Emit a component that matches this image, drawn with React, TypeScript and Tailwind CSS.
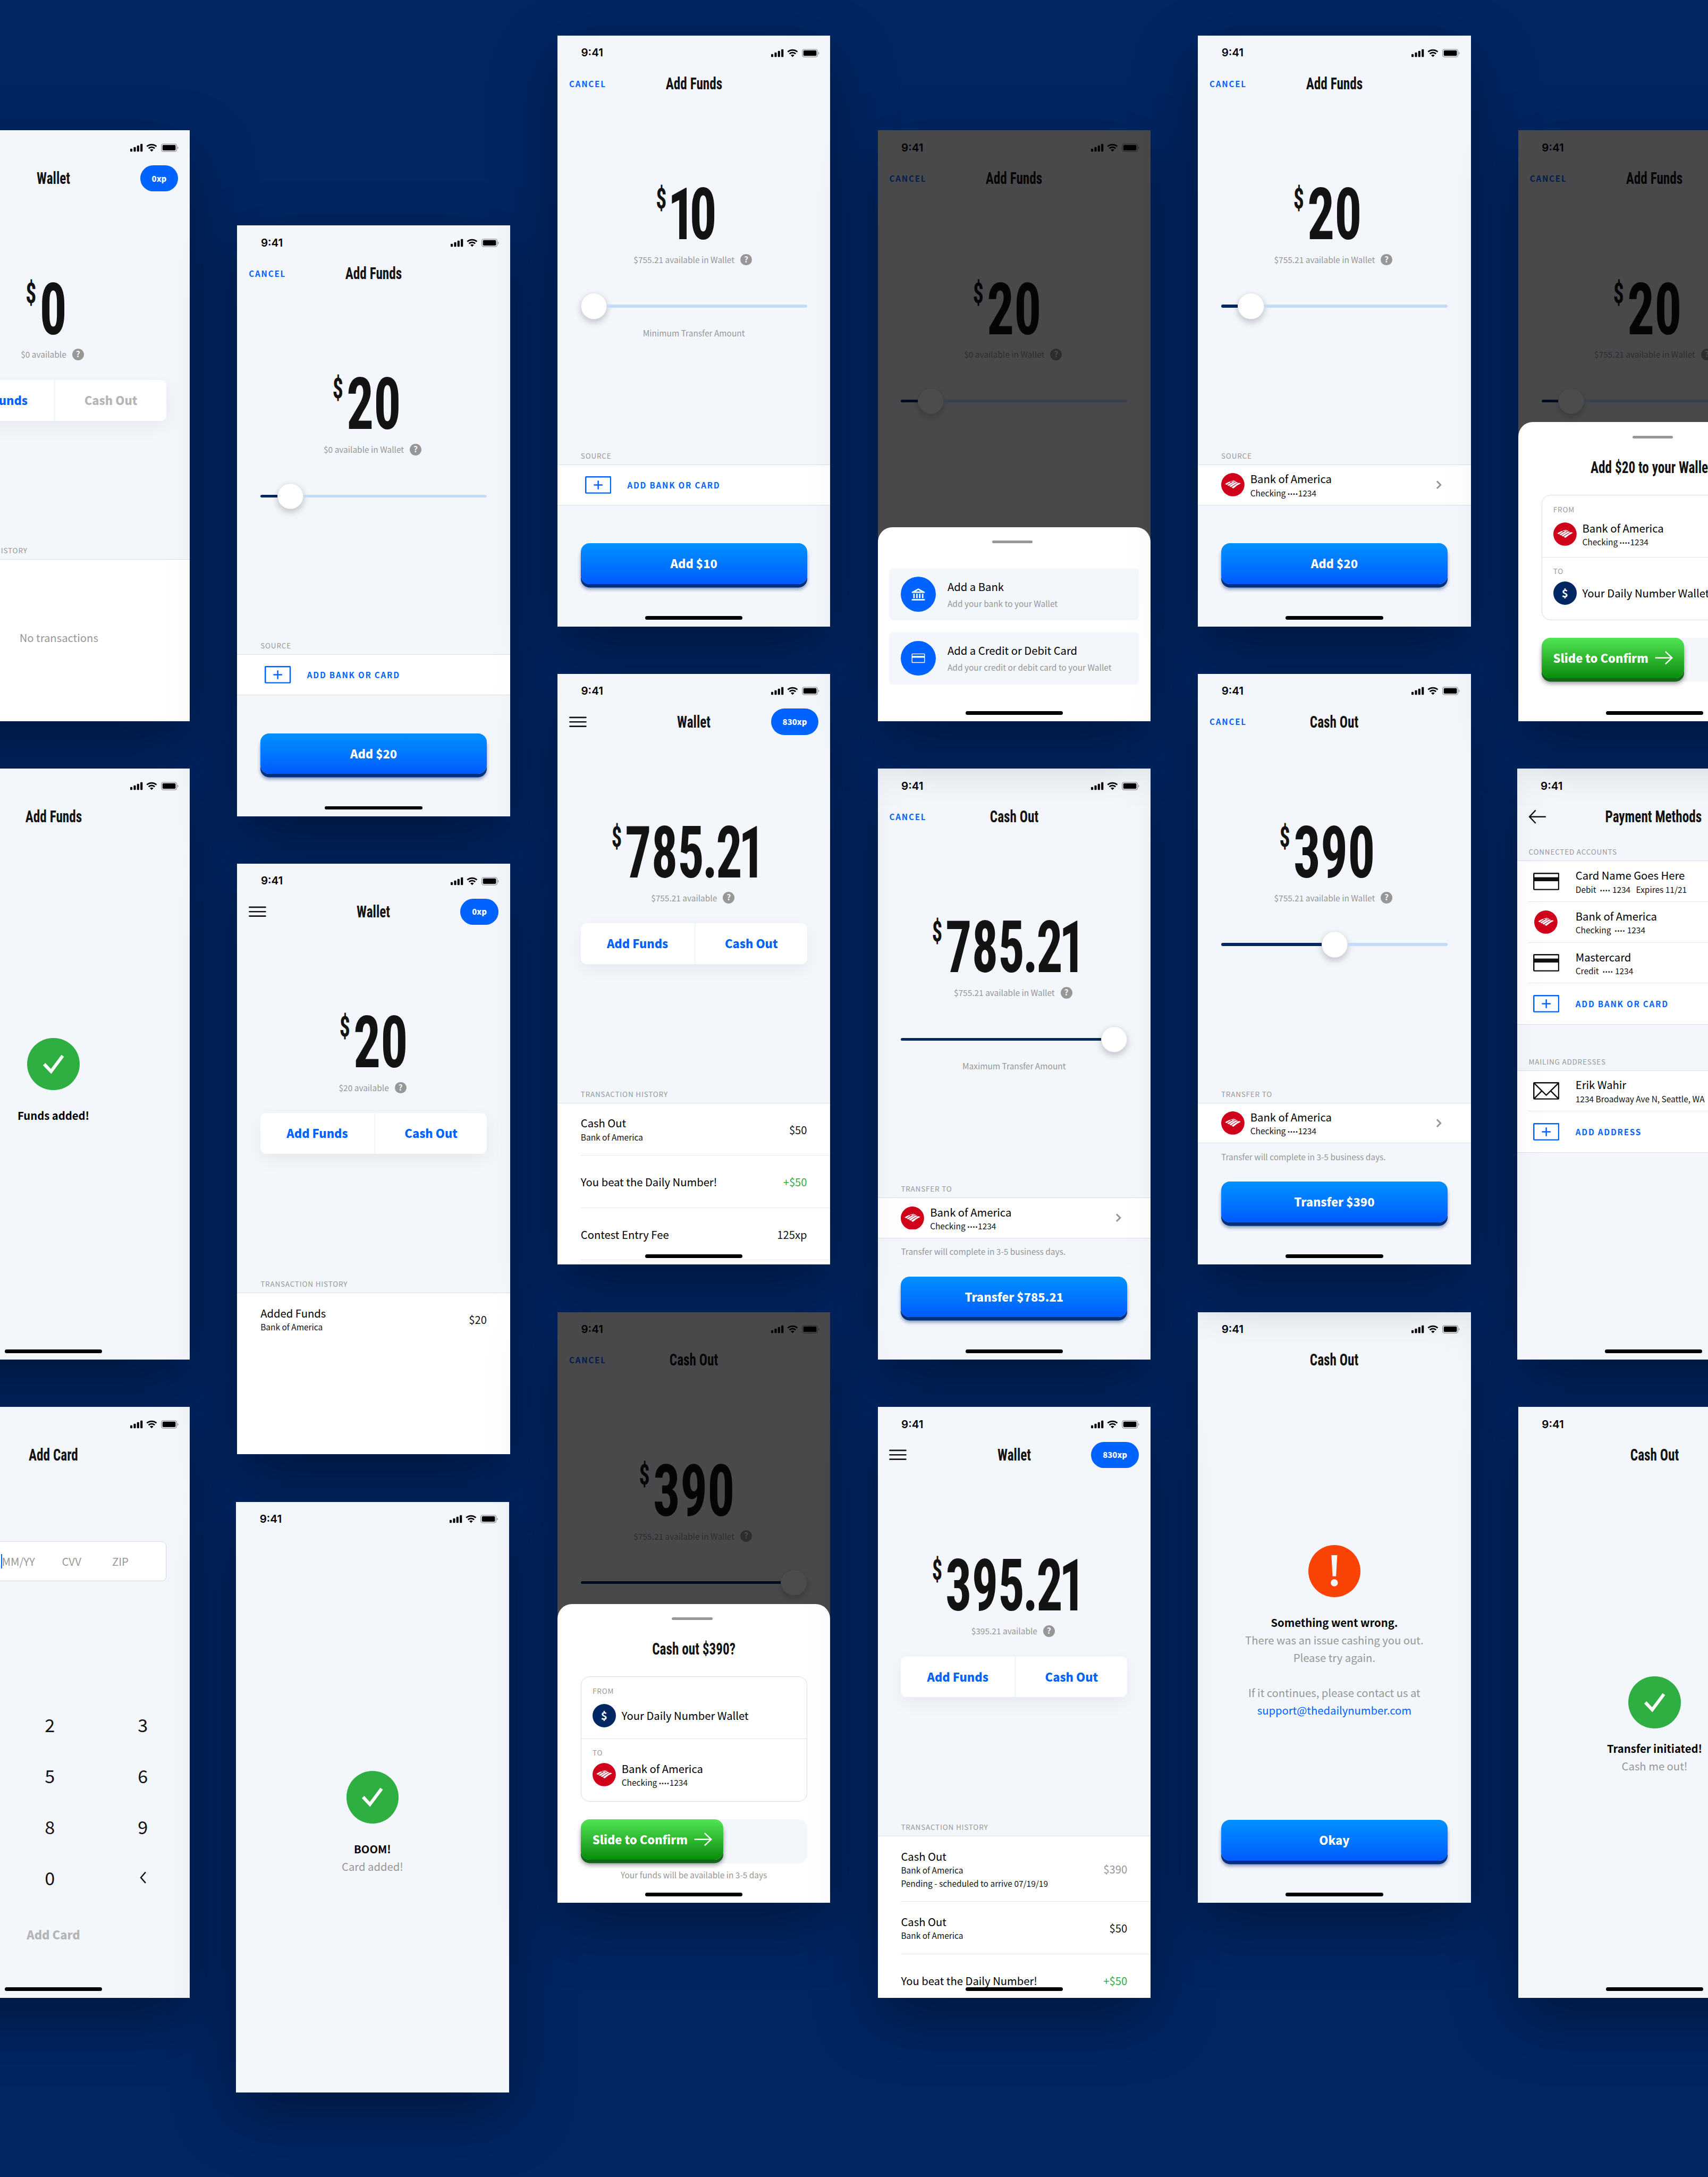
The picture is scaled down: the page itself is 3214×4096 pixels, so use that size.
import type { ReactNode } from "react";

/* ---------- icons ---------- */

function StatusIcons() {
  return (
    <svg className="h-[12px] w-[67px] text-black" viewBox="0 0 67 12" fill="currentColor">
      <rect x="0" y="7.2" width="3" height="4" rx="0.8" />
      <rect x="4.7" y="5" width="3" height="6.2" rx="0.8" />
      <rect x="9.3" y="2.8" width="3" height="8.4" rx="0.8" />
      <rect x="14" y="0.5" width="3" height="10.7" rx="0.8" />
      <g fill="none" stroke="currentColor" strokeWidth="2">
        <path d="M22.9 4.1A9.6 9.6 0 0 1 36.1 4.1" />
        <path d="M25.3 6.7A6 6 0 0 1 33.7 6.7" />
      </g>
      <path d="M27.1 8.8A3.4 3.4 0 0 1 31.9 8.8L29.5 11.2Z" />
      <rect x="42.9" y="0.6" width="21" height="10.4" rx="2.6" fill="none" stroke="currentColor" opacity="0.38" />
      <path d="M65 4v3.8a2.1 2.1 0 0 0 0-3.8Z" opacity="0.4" />
      <rect x="44.4" y="2.1" width="18" height="7.4" rx="1.3" />
    </svg>
  );
}

function AddBoxIcon() {
  return (
    <svg className="h-6 w-9" viewBox="0 0 36 24" fill="none" stroke="#0063ff" strokeWidth="1.8">
      <rect x="0.9" y="0.9" width="34.2" height="22.2" rx="0.6" />
      <path d="M12 12h12M18 6v12" />
    </svg>
  );
}

function CardIcon() {
  return (
    <svg className="h-6 w-9" viewBox="0 0 36 24" fill="none" stroke="#111" strokeWidth="1.8">
      <rect x="0.9" y="0.9" width="34.2" height="22.2" rx="0.8" />
      <path d="M1 9h34" strokeWidth="5.4" />
    </svg>
  );
}

function MailIcon() {
  return (
    <svg className="h-6 w-9" viewBox="0 0 36 24" fill="none" stroke="#111" strokeWidth="1.8">
      <rect x="0.9" y="0.9" width="34.2" height="22.2" rx="0.8" />
      <path d="M1.4 1.6L18 18L34.6 1.6M1.4 22.6L12 12M34.6 22.6L24 12" />
    </svg>
  );
}

function BofaIcon() {
  return (
    <svg className="h-8 w-8 shrink-0" viewBox="0 0 32 32">
      <circle cx="16" cy="16" r="16" fill="#d0021b" />
      <g fill="#fff">
        <path d="M14.2 19.8C17.6 17.2 20.6 15.1 24.2 13.4L27 14.2C23.2 15.9 20.1 18.2 16.6 21.2Z" />
        <path d="M11.1 18.1C14.4 15.7 17.2 13.9 20.7 12.3L23.2 13.1C19.7 14.7 16.7 16.8 13.4 19.4Z" />
        <path d="M8.3 16.6C11 14.7 13.2 13.5 16 12.1L18 12.9C15.3 14.2 13 15.7 10.4 17.7Z" />
        <path d="M5.4 15C7.7 13.5 9.3 12.6 11.4 11.7L13.4 12.4C11.3 13.5 9.6 14.6 7.5 16.2Z" />
        <path d="M12.3 11.3L14.1 10.7L20 12L18.7 12.6Z" />
        <path d="M15 10.5L16.5 10.1L20.8 11.3L19.9 11.7Z" />
      </g>
    </svg>
  );
}

function DollarIcon() {
  return (
    <div className="flex h-8 w-8 shrink-0 items-center justify-center rounded-full bg-[#002664]">
      <span className="text-[15px] leading-[16px] font-bold text-white">$</span>
    </div>
  );
}

function ArrowRight() {
  return (
    <svg className="h-[20px] w-[25px]" viewBox="0 0 25 20" fill="none" stroke="#fff" strokeWidth="1.8">
      <path d="M0.5 10h23M14.5 1.4L23.5 10L14.5 18.6" />
    </svg>
  );
}

/* ---------- text primitives ---------- */

function Heading({ children }: { children: ReactNode }) {
  return (
    <span className="inline-block scale-x-[0.795] pt-[1px] font-['Roboto_Condensed','Roboto',sans-serif] text-[23.2px] leading-[28px] font-bold whitespace-nowrap text-[#131313] [font-stretch:75%]">
      {children}
    </span>
  );
}

function SectionLabel({ children, inset = "pl-8" }: { children: ReactNode; inset?: string }) {
  return (
    <div className={`${inset} h-[20.5px] shrink-0 text-[9.85px] leading-[16.5px] tracking-[0.6px] whitespace-nowrap text-[#979797]`}>
      {children}
    </div>
  );
}

function TextLink({ children }: { children: ReactNode }) {
  return (
    <span className="pt-[0.5px] text-[11.1px] leading-[16px] font-bold tracking-[1.3px] whitespace-nowrap text-[#0063ff]">
      {children}
    </span>
  );
}

/* ---------- chrome ---------- */

function StatusBar() {
  return (
    <div className="flex h-11 shrink-0 items-center justify-between pt-1 pr-[14.6px] pl-[32.5px]">
      <span className="font-['Inter',sans-serif] text-[15px] leading-[18px] font-semibold text-black">9:41</span>
      <StatusIcons />
    </div>
  );
}

type Left = "cancel" | "menu" | "back";

function NavBar({ title, left, xp }: { title?: string; left?: Left; xp?: string }) {
  return (
    <div className="grid h-11 shrink-0 grid-cols-[1fr_auto_1fr] items-center px-4">
      <div className="flex">
        {left === "cancel" && <TextLink>CANCEL</TextLink>}
        {left === "menu" && (
          <svg className="h-[15px] w-6" viewBox="0 0 24 15" stroke="#131313" strokeWidth="1.9" strokeLinecap="round">
            <path d="M1 1.4h22M1 7.5h22M1 13.6h22" />
          </svg>
        )}
        {left === "back" && (
          <svg className="h-5 w-6" viewBox="0 0 24 20" fill="none" stroke="#131313" strokeWidth="1.8">
            <path d="M24 10H1.5M10 1L1.5 10L10 19" />
          </svg>
        )}
      </div>
      <div>{title && <Heading>{title}</Heading>}</div>
      <div className="flex justify-end">
        {xp && (
          <span className="flex h-9 items-center rounded-full bg-[#0063ff] px-4 text-[10.9px] leading-[16px] font-black text-white">
            {xp}
          </span>
        )}
      </div>
    </div>
  );
}

function Phone({
  children,
  title,
  left,
  xp,
  under,
  home = true,
  sheet,
  shift,
}: {
  children?: ReactNode;
  title?: string;
  left?: Left;
  xp?: string;
  under?: boolean;
  home?: boolean;
  sheet?: ReactNode;
  shift?: boolean;
}) {
  return (
    <div
      className={`relative flex h-[812px] w-[375px] shrink-0 flex-col overflow-hidden bg-[#f3f6fb] text-black shadow-[0_30px_80px_rgba(0,0,0,0.4)] ${
        under ? "z-0" : "z-10"
      } ${shift ? "-ml-[1.6px]" : ""}`}
    >
      <StatusBar />
      <NavBar title={title} left={left} xp={xp} />
      {children}
      {sheet && <div className="absolute inset-0 flex flex-col justify-end bg-black/70">{sheet}</div>}
      {home && (
        <div className="absolute inset-x-0 bottom-[9px] flex justify-center">
          <div className="h-[5px] w-[134px] rounded-full bg-black" />
        </div>
      )}
    </div>
  );
}

/* ---------- wallet pieces ---------- */

/* Tightens the space round the narrow glyphs, which are tabular in this face. */
function kern(char: string, next?: string) {
  let space = 0;
  if (char === "1") space -= 10;
  if (char === ".") space -= 3;
  if (next === "1") space -= 7;
  if (next === ".") space -= 3;
  return space;
}

function Digits({ value }: { value: string }) {
  return (
    <span className="whitespace-nowrap">
      {value.split("").map((c, i) => (
        <span key={i} style={{ letterSpacing: kern(c, value[i + 1]) }}>
          {c}
        </span>
      ))}
    </span>
  );
}

function Amount({ value, available, centered }: { value: string; available: string; centered?: boolean }) {
  const leadingOne = value.startsWith("1");
  return (
    <>
      <div
        className={`mt-[122.5px] flex h-[72px] shrink-0 justify-center font-['Roboto_Condensed','Roboto',sans-serif] font-bold text-[#131313] [font-stretch:75%] ${
          centered ? "pl-[19px]" : ""
        } ${leadingOne ? "pr-[5px]" : ""} ${value.includes(".") ? "pr-[4px]" : ""}`}
      >
        <div
          className={`relative flex text-[98.8px] leading-[72px] ${
            value.includes(".") ? "scale-x-[0.725]" : "scale-x-[0.75]"
          }`}
        >
          <Digits value={value} />
          <span
            className={`absolute top-[-6px] right-full text-[38.7px] leading-[40px] ${
              leadingOne ? "mr-[2px]" : "mr-[6px]"
            }`}
          >
            $
          </span>
        </div>
      </div>
      <div className="mt-[17.5px] flex h-4 shrink-0 items-center justify-center gap-2 pr-[3px]">
        <span className="pt-[0.5px] text-[11.3px] leading-[16px] whitespace-nowrap text-[#979797]">{available}</span>
        <span className="flex h-4 w-4 items-center justify-center rounded-full bg-[#979797] text-[11.5px] leading-[12px] font-bold text-[#f3f6fb]">
          <span className="-mt-px">?</span>
        </span>
      </div>
    </>
  );
}

function Slider({ at, note }: { at: number; note?: string }) {
  return (
    <>
      <div className="mx-8 mt-[38px] flex h-9 w-[311px] shrink-0 items-center">
        <div className="h-1 rounded-l-full bg-[#002664]" style={{ width: at }} />
        <div className="h-9 w-9 shrink-0 rounded-full border-[0.5px] border-black/10 bg-white shadow-[0_4px_9px_rgba(0,0,0,0.22)]" />
        <div className="h-1 flex-1 rounded-r-full bg-[#c4dbfd]" />
      </div>
      {note && <div className="mt-[11px] text-center text-[11.3px] leading-[16px] text-[#979797]">{note}</div>}
    </>
  );
}

function PrimaryButton({ children }: { children: ReactNode }) {
  return (
    <div className="mx-8 mb-[58px] flex h-14 w-[311px] shrink-0 items-center justify-center rounded-[12px] bg-linear-to-b from-[#0090ff] to-[#0059ff] pb-[1px] text-[16px] leading-[20px] font-black text-white shadow-[0_4.7px_0_#002f7e,0_7px_5px_rgba(0,40,110,0.45)]">
      {children}
    </div>
  );
}

/* A masked number: the dots need a face whose bullet is not full width. */
function Masked({ text }: { text: string }) {
  const [before, after] = text.split("••••");
  if (after === undefined) return <>{text}</>;
  return (
    <>
      {before}
      <span className="font-['Roboto',sans-serif] text-[9.6px] tracking-[0.4px]">••••</span>
      {after}
    </>
  );
}

function BankText({ sub = "Checking ••••1234", name = "Bank of America" }: { sub?: string; name?: string }) {
  return (
    <div className="flex flex-col pt-[1.5px] whitespace-nowrap">
      <span className="text-[14.78px] leading-[20px]">{name}</span>
      <span className="h-[18px] text-[11.3px] leading-[18px] whitespace-pre text-[#131313]">
        <Masked text={sub} />
      </span>
    </div>
  );
}

function SourceRow({ linked }: { linked: boolean }) {
  return (
    <div className="flex h-14 shrink-0 items-center border-y border-[#dcdfe3] bg-white">
      {linked ? (
        <>
          <div className="pl-8">
            <BofaIcon />
          </div>
          <div className="flex-1 pl-[8px]">
            <BankText />
          </div>
          <svg className="mr-[40px] h-[12px] w-[8px]" viewBox="0 0 8 12" fill="none" stroke="#979797" strokeWidth="2.2">
            <path d="M1.4 1L6.4 6L1.4 11" />
          </svg>
        </>
      ) : (
        <>
          <div className="w-24 pl-[38px]">
            <AddBoxIcon />
          </div>
          <TextLink>ADD BANK OR CARD</TextLink>
        </>
      )}
    </div>
  );
}

function TransferScreen({
  value,
  available,
  at,
  note,
  label,
  linked,
  footnote,
  button,
}: {
  value: string;
  available: string;
  at: number;
  note?: string;
  label?: string;
  linked?: boolean;
  footnote?: string;
  button?: string;
}) {
  return (
    <>
      <Amount value={value} available={available} />
      <Slider at={at} note={note} />
      {label && (
        <>
          <div className="flex-1" />
          <SectionLabel>{label}</SectionLabel>
          <SourceRow linked={!!linked} />
          <div className="h-[52.5px] shrink-0 pt-[10.5px] pl-8 text-[11.3px] leading-[16px] text-[#979797]">{footnote}</div>
          <PrimaryButton>{button}</PrimaryButton>
        </>
      )}
    </>
  );
}

type Tx = { name: string; lines?: string[]; amount: string; tone?: string };

function WalletScreen({
  value,
  available,
  canCashOut = true,
  centered,
  history,
}: {
  value: string;
  available: string;
  canCashOut?: boolean;
  centered?: boolean;
  history: Tx[];
}) {
  return (
    <>
      <Amount value={value} available={available} centered={centered} />
      <div className="mx-8 mt-[27px] grid h-14 w-[311px] shrink-0 grid-cols-[156px_1fr] overflow-hidden rounded-[8px] text-center text-[16px] leading-[55px] font-black text-[#0063ff] shadow-[0_8px_24px_rgba(0,0,0,0.06)]">
        <span className="bg-white">Add Funds</span>
        <span className={`ml-[2px] bg-white ${canCashOut ? "" : "text-[#b5b5b5]"}`}>Cash Out</span>
      </div>
      <div className="flex-1" />
      <SectionLabel>TRANSACTION HISTORY</SectionLabel>
      <div className="h-[222.5px] shrink-0 overflow-hidden border-t border-[#dcdfe3] bg-white">
        {history.length === 0 && (
          <div className="pt-[97px] pl-[15px] text-center text-[14.78px] leading-[20px] text-[#979797]">No transactions</div>
        )}
        {history.map((t, i) => (
          <div
            key={i}
            className={`ml-8 flex items-center justify-between pt-[1px] pr-8 ${
              history.length > 1 ? "border-b border-[#e3e5e6]" : ""
            } ${t.lines && t.lines.length > 1 ? "h-[90px]" : "h-[72px]"}`}
          >
            <div className="flex flex-col whitespace-nowrap">
              <span className="text-[14.78px] leading-[20px]">{t.name}</span>
              {t.lines?.map((l) => (
                <span key={l} className="text-[11.3px] leading-[18px] text-[#131313]">
                  {l}
                </span>
              ))}
            </div>
            <span className={`text-[14.78px] leading-[20px] ${t.tone ?? "text-[#131313]"}`}>{t.amount}</span>
          </div>
        ))}
      </div>
    </>
  );
}

/* ---------- sheets ---------- */

function SheetHandle() {
  return <div className="mt-[18.5px] ml-[157px] h-1 w-14 rounded-full bg-[#979797]" />;
}

function MethodSheet() {
  const items = [
    { name: "Add a Bank", sub: "Add your bank to your Wallet", bank: true },
    { name: "Add a Credit or Debit Card", sub: "Add your credit or debit card to your Wallet", bank: false },
  ];
  return (
    <div className="flex h-[267px] flex-col rounded-t-[20px] bg-white">
      <SheetHandle />
      <div className="mx-4 mt-[34px] flex flex-col gap-4">
        {items.map((m) => (
          <div key={m.name} className="flex h-[72px] items-center rounded-[6px] bg-[#f3f6fb] pl-4">
            <div className="flex h-12 w-12 items-center justify-center rounded-full bg-[#0063ff]">
              {m.bank ? (
                <svg className="h-[18px] w-[19px]" viewBox="0 0 19 18" fill="#fff">
                  <path fillRule="evenodd" d="M9.5 0.8L18.5 5.6V7H0.5V5.6ZM9.5 2.9L6 4.9H13Z" />
                  <path d="M2.6 8h2v6.2h-2zM6.6 8h2v6.2h-2zM10.5 8h2v6.2h-2zM14.5 8h2v6.2h-2zM0.5 15.4h18v2h-18z" />
                </svg>
              ) : (
                <svg className="h-[14px] w-[19px]" viewBox="0 0 19 14" fill="none" stroke="#fff">
                  <rect x="0.9" y="1" width="17.2" height="11.8" rx="0.4" />
                  <path d="M1 5h17" strokeWidth="2.4" />
                </svg>
              )}
            </div>
            <div className="flex flex-col pt-[3px] pl-4 whitespace-nowrap">
              <span className="text-[14.78px] leading-[22px]">{m.name}</span>
              <span className="text-[11.3px] leading-[24px] text-[#979797]">{m.sub}</span>
            </div>
          </div>
        ))}
      </div>
    </div>
  );
}

function ConfirmSheet({ title, reverse, note }: { title: string; reverse?: boolean; note?: string }) {
  const bank = (
    <>
      <BofaIcon />
      <BankText />
    </>
  );
  const wallet = (
    <>
      <DollarIcon />
      <span className="text-[14.78px] leading-[20px] whitespace-nowrap">Your Daily Number Wallet</span>
    </>
  );
  return (
    <div className="flex h-[411px] flex-col rounded-t-[20px] bg-white">
      <SheetHandle />
      <div className="mt-[25px] h-[28px] text-center">
        <Heading>{title}</Heading>
      </div>
      <div className="mx-8 mt-[24.5px] h-[172px] rounded-[12px] border border-[#dcdcdc]">
        <div className="h-[85px] border-b border-[#e3e3e3] pt-[11.5px] pl-[15.5px]">
          <div className="text-[9.85px] leading-[16px] tracking-[0.6px] text-[#979797]">FROM</div>
          <div className="mt-[9.5px] flex h-8 items-center gap-[8px]">{reverse ? wallet : bank}</div>
        </div>
        <div className="pt-[11px] pl-[15.5px]">
          <div className="text-[9.85px] leading-[16px] tracking-[0.6px] text-[#979797]">TO</div>
          <div className="mt-[6px] flex h-8 items-center gap-[8px]">{reverse ? bank : wallet}</div>
        </div>
      </div>
      <div className="mx-8 mt-[24px] h-[61px] rounded-[12px] bg-[#f3f6fb]">
        <div className="flex h-14 w-[196px] items-center gap-[9px] rounded-[12px] bg-linear-to-b from-[#4fe552] to-[#038d06] pl-4 text-[16px] leading-[20px] font-black whitespace-nowrap text-white shadow-[0_4.7px_0_#14661a,0_7px_6px_rgba(0,0,0,0.4)]">
          Slide to Confirm
          <ArrowRight />
        </div>
      </div>
      {note && <div className="mt-[8px] text-center text-[11.3px] leading-[16px] text-[#979797]">{note}</div>}
    </div>
  );
}

/* ---------- result screens ---------- */

function Success({ title, note, tight }: { title: string; note?: string; tight?: boolean }) {
  return (
    <div className="flex flex-col items-center pt-[282px] text-[14.78px] leading-[24px]">
      <div className="flex h-[72px] w-[72px] items-center justify-center rounded-full bg-[#2fae42]">
        <svg className="h-[28px] w-[32px]" viewBox="0 0 32 28" fill="none" stroke="#fff" strokeWidth="4.4">
          <path d="M3 14L12.5 24L28.5 2.5" />
        </svg>
      </div>
      <span className={`font-bold ${tight ? "mt-[16px]" : "mt-[23.5px]"}`}>{title}</span>
      {note && <span className="text-[#979797]">{note}</span>}
    </div>
  );
}

function ErrorScreen() {
  return (
    <>
      <div className="flex flex-col items-center pt-[232px] text-[14.78px] leading-[24px] text-[#979797]">
        <div className="flex h-[72px] w-[72px] items-center justify-center rounded-full bg-[#fa4406]">
          <svg className="h-[43px] w-[10px]" viewBox="0 0 10 43" fill="#f3f6fb">
            <path d="M1 0H9L7.4 29H2.6Z" />
            <circle cx="5" cy="38" r="4.9" />
          </svg>
        </div>
        <span className="mt-[23.5px] font-bold text-black">Something went wrong.</span>
        <span>There was an issue cashing you out.</span>
        <span>Please try again.</span>
        <span className="mt-6">If it continues, please contact us at</span>
        <span className="text-[#0063ff]">support@thedailynumber.com</span>
      </div>
      <div className="flex-1" />
      <PrimaryButton>Okay</PrimaryButton>
    </>
  );
}

function AddCardScreen() {
  const keys = ["", "2", "3", "", "5", "6", "", "8", "9", "", "0", "<"];
  return (
    <>
      <div className="mx-8 mt-[96.5px] flex h-[55px] w-[311px] shrink-0 items-center rounded-[6px] border border-[#d8d8d8] bg-white pl-[82.5px] text-[14.78px] leading-[20px] text-[#979797]">
        <span className="flex w-[84px] items-center">
          <span className="h-[20px] w-[1.5px] bg-[#0063ff]" />
          MM/YY
        </span>
        <span className="w-[69px]">CVV</span>
        <span>ZIP</span>
      </div>
      <div className="mt-[162.5px] ml-[-9.5px] grid w-[384px] shrink-0 grid-cols-3 text-center text-[25px] leading-[70px] text-[#131313]">
        {keys.map((k, i) => (
          <div key={i} className="flex h-[70px] items-center justify-center">
            {k === "<" ? (
              <svg className="h-[17px] w-[9px]" viewBox="0 0 9 17" fill="none" stroke="#131313" strokeWidth="1.8">
                <path d="M8 1L1.5 8.5L8 16" />
              </svg>
            ) : (
              k
            )}
          </div>
        ))}
      </div>
      <div className="mt-[33px] text-center text-[16px] leading-[20px] font-black text-[#b5b5b5]">Add Card</div>
    </>
  );
}

function MethodRow({ icon, children, last }: { icon: ReactNode; children: ReactNode; last?: boolean }) {
  return (
    <div className={`ml-4 flex h-14 items-center ${last ? "" : "border-b border-[#e3e5e6]"}`}>
      <div className="flex w-[64.5px] justify-center pr-[16.5px]">{icon}</div>
      {children}
    </div>
  );
}

function PaymentMethodsScreen() {
  return (
    <>
      <div className="h-[18px] shrink-0" />
      <SectionLabel inset="pl-4">CONNECTED ACCOUNTS</SectionLabel>
      <div className="border-y border-[#dcdfe3] bg-white">
        <MethodRow icon={<CardIcon />}>
          <BankText name="Card Name Goes Here" sub={"Debit  •••• 1234   Expires 11/21"} />
        </MethodRow>
        <MethodRow icon={<BofaIcon />}>
          <BankText sub={"Checking  •••• 1234"} />
        </MethodRow>
        <MethodRow icon={<CardIcon />}>
          <BankText name="Mastercard" sub={"Credit  •••• 1234"} />
        </MethodRow>
        <MethodRow icon={<AddBoxIcon />} last>
          <TextLink>ADD BANK OR CARD</TextLink>
        </MethodRow>
      </div>
      <div className="h-[42px] shrink-0" />
      <SectionLabel inset="pl-4">MAILING ADDRESSES</SectionLabel>
      <div className="border-y border-[#dcdfe3] bg-white">
        <MethodRow icon={<MailIcon />}>
          <BankText name="Erik Wahir" sub="1234 Broadway Ave N, Seattle, WA" />
        </MethodRow>
        <MethodRow icon={<AddBoxIcon />} last>
          <TextLink>ADD ADDRESS</TextLink>
        </MethodRow>
      </div>
    </>
  );
}

/* ---------- board ---------- */

function Column({ offset, children }: { offset: string; children: ReactNode }) {
  return <div className={`flex w-[375px] shrink-0 flex-col gap-[65.2px] ${offset}`}>{children}</div>;
}

export default function App() {
  return (
    <div className="h-[4096px] w-[3214px] overflow-hidden bg-[#002664] font-['Noto_Sans_CJK_SC',sans-serif]">
      <div className="-ml-[156.2px] w-max">
        <div className="flex w-max gap-[65.2px] [zoom:1.36893]">
          <Column offset="pt-[179.3px]">
            <Phone title="Wallet" xp="0xp" home={false}>
              <WalletScreen value="0" available="$0 available" canCashOut={false} history={[]} />
            </Phone>
            <Phone title="Add Funds">
              <Success title="Funds added!" />
            </Phone>
            <Phone title="Add Card">
              <AddCardScreen />
            </Phone>
          </Column>
          <Column offset="pt-[309.8px]">
            <Phone title="Add Funds" left="cancel">
              <TransferScreen value="20" available="$0 available in Wallet" at={23} label="SOURCE" button="Add $20" />
            </Phone>
            <Phone title="Wallet" left="menu" xp="0xp" home={false}>
              <WalletScreen
                value="20"
                available="$20 available"
                centered
                history={[{ name: "Added Funds", lines: ["Bank of America"], amount: "$20" }]}
              />
            </Phone>
            <Phone shift home={false}>
              <Success title="BOOM!" note="Card added!" />
            </Phone>
          </Column>
          <Column offset="pt-[48.9px]">
            <Phone title="Add Funds" left="cancel">
              <TransferScreen
                value="10"
                available="$755.21 available in Wallet"
                at={0}
                note="Minimum Transfer Amount"
                label="SOURCE"
                button="Add $10"
              />
            </Phone>
            <Phone title="Wallet" left="menu" xp="830xp">
              <WalletScreen
                value="785.21"
                available="$755.21 available"
                history={[
                  { name: "Cash Out", lines: ["Bank of America"], amount: "$50" },
                  { name: "You beat the Daily Number!", amount: "+$50", tone: "text-[#2fae42]" },
                  { name: "Contest Entry Fee", amount: "125xp" },
                ]}
              />
            </Phone>
            <Phone
              title="Cash Out"
              left="cancel"
              sheet={<ConfirmSheet title="Cash out $390?" reverse note="Your funds will be available in 3-5 days" />}
            >
              <TransferScreen value="390" available="$755.21 available in Wallet" at={275} />
            </Phone>
          </Column>
          <Column offset="pt-[179.3px]">
            <Phone title="Add Funds" left="cancel" sheet={<MethodSheet />}>
              <TransferScreen value="20" available="$0 available in Wallet" at={23} />
            </Phone>
            <Phone title="Cash Out" left="cancel" under>
              <TransferScreen
                value="785.21"
                available="$755.21 available in Wallet"
                at={275}
                note="Maximum Transfer Amount"
                label="TRANSFER TO"
                linked
                footnote="Transfer will complete in 3-5 business days."
                button="Transfer $785.21"
              />
            </Phone>
            <Phone title="Wallet" left="menu" xp="830xp">
              <WalletScreen
                value="395.21"
                available="$395.21 available"
                history={[
                  {
                    name: "Cash Out",
                    lines: ["Bank of America", "Pending - scheduled to arrive 07/19/19"],
                    amount: "$390",
                    tone: "text-[#979797]",
                  },
                  { name: "Cash Out", lines: ["Bank of America"], amount: "$50" },
                  { name: "You beat the Daily Number!", amount: "+$50", tone: "text-[#2fae42]" },
                ]}
              />
            </Phone>
          </Column>
          <Column offset="pt-[48.9px]">
            <Phone title="Add Funds" left="cancel">
              <TransferScreen
                value="20"
                available="$755.21 available in Wallet"
                at={23}
                label="SOURCE"
                linked
                button="Add $20"
              />
            </Phone>
            <Phone title="Cash Out" left="cancel">
              <TransferScreen
                value="390"
                available="$755.21 available in Wallet"
                at={138}
                label="TRANSFER TO"
                linked
                footnote="Transfer will complete in 3-5 business days."
                button="Transfer $390"
              />
            </Phone>
            <Phone title="Cash Out" under>
              <ErrorScreen />
            </Phone>
          </Column>
          <Column offset="pt-[179.3px]">
            <Phone title="Add Funds" left="cancel" sheet={<ConfirmSheet title="Add $20 to your Wallet?" />}>
              <TransferScreen value="20" available="$755.21 available in Wallet" at={23} />
            </Phone>
            <Phone title="Payment Methods" left="back" under shift>
              <PaymentMethodsScreen />
            </Phone>
            <Phone title="Cash Out">
              <Success title="Transfer initiated!" note="Cash me out!" tight />
            </Phone>
          </Column>
        </div>
      </div>
    </div>
  );
}
